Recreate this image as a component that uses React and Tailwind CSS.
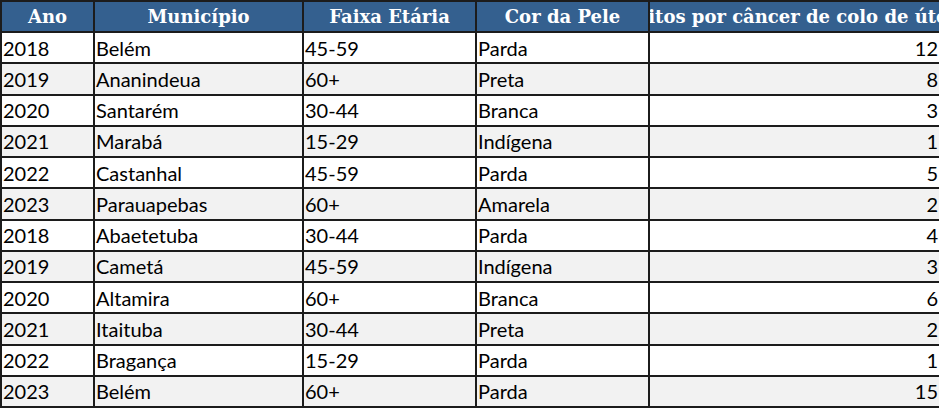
import React from 'react';

const rows = [
  ['2018', 'Belém', '45-59', 'Parda', 12],
  ['2019', 'Ananindeua', '60+', 'Preta', 8],
  ['2020', 'Santarém', '30-44', 'Branca', 3],
  ['2021', 'Marabá', '15-29', 'Indígena', 1],
  ['2022', 'Castanhal', '45-59', 'Parda', 5],
  ['2023', 'Parauapebas', '60+', 'Amarela', 2],
  ['2018', 'Abaetetuba', '30-44', 'Parda', 4],
  ['2019', 'Cametá', '45-59', 'Indígena', 3],
  ['2020', 'Altamira', '60+', 'Branca', 6],
  ['2021', 'Itaituba', '30-44', 'Preta', 2],
  ['2022', 'Bragança', '15-29', 'Parda', 1],
  ['2023', 'Belém', '60+', 'Parda', 15],
];

const headers = ['Ano', 'Município', 'Faixa Etária', 'Cor da Pele', 'Óbitos por câncer de colo de útero'];
const widths = ['w-[93px]', 'w-[209px]', 'w-[173px]', 'w-[173px]', 'w-[291px]'];

export default function App() {
  return (
    <div className="w-[939px] h-[409px] overflow-hidden bg-white">
      <table className="w-[939px] table-fixed border-collapse border-2 border-[#1c1c1c]">
        <colgroup>
          {widths.map((w, i) => <col key={i} className={w} />)}
        </colgroup>
        <thead>
          <tr className="h-[31px] bg-[#34608f]">
            {headers.map((h, i) => (
              <th key={i} className="p-0 border-2 border-[#1c1c1c] text-white font-bold text-[18px] leading-[26px] font-['DejaVu_Serif',serif]">
                <div className="flex justify-center overflow-hidden whitespace-nowrap">{h}</div>
              </th>
            ))}
          </tr>
        </thead>
        <tbody className="font-['Lato',sans-serif] text-[20px] text-black">
          {rows.map((r, i) => (
            <tr key={i} className={`h-[31.25px] ${i % 2 ? 'bg-[#f2f2f2]' : 'bg-white'}`}>
              {r.map((c, j) => (
                <td key={j} className={`border-2 border-[#1c1c1c] py-0 leading-[24px] whitespace-nowrap overflow-hidden ${j === 4 ? 'text-right pr-[1px]' : 'pl-[1px]'}`}>
                  {c}
                </td>
              ))}
            </tr>
          ))}
        </tbody>
      </table>
    </div>
  );
}
